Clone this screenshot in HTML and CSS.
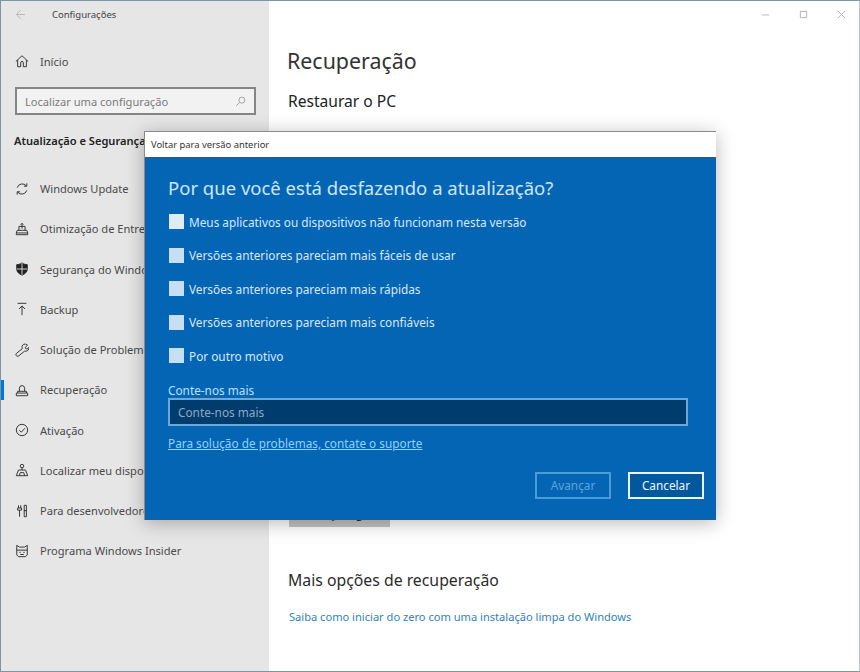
FILE: index.html
```html
<!DOCTYPE html>
<html lang="pt-BR">
<head>
<meta charset="utf-8">
<title>Configurações</title>
<link rel="stylesheet" href="styles.css">
</head>
<body>
<div class="window">
  <aside class="sidebar">
    <div class="appbar">
      <svg class="back" viewBox="0 0 12 12"><path d="M11 6H1.500M6 1.500L1.500 6L6 10.500"/></svg>
      <span class="apptitle">Configurações</span>
    </div>
    <a class="nav home">
      <svg class="ico" viewBox="0 0 16 16"><path d="M1 8.500L8 2l7 6.500M3 7v7.500h3.500V10a1.500 1.500 0 0 1 3 0v4.500H13V7"/></svg>
      <span>Início</span>
    </a>
    <div class="search">
      <span>Localizar uma configuração</span>
      <svg class="searchico" viewBox="0 0 12 12"><circle cx="7.500" cy="4.500" r="3.300"/><path d="M5 7L1.500 10.500"/></svg>
    </div>
    <div class="section">Atualização e Segurança</div>
    <nav class="navlist">
      <a class="nav">
        <svg class="ico" viewBox="0 0 16 16"><path d="M2.500 6.500A6 6 0 0 1 13 4.500M13.500 9.500A6 6 0 0 1 3 11.500M13.500 1.500v3.300h-3.300M2.500 14.500v-3.300h3.300"/></svg>
        <span>Windows Update</span>
      </a>
      <a class="nav">
        <svg class="ico" viewBox="0 0 16 16"><path d="M1.500 14.500h13v-2l-1-3h-11l-1 3zM1.500 12.500h13M4.500 9.500V5h7v4.500M8 7.500V1.500M6.500 3L8 1.500L9.500 3"/></svg>
        <span>Otimização de Entrega</span>
      </a>
      <a class="nav">
        <svg class="ico" viewBox="0 0 16 16"><path class="solid" d="M8 1C6 2.500 4 3 2 3v5c0 3.500 2.500 5.500 6 7c3.500-1.500 6-3.500 6-7V3c-2 0-4-.5-6-2z"/><path class="cut" d="M8 1v14M2 8h12"/></svg>
        <span>Segurança do Windows</span>
      </a>
      <a class="nav">
        <svg class="ico" viewBox="0 0 16 16"><path d="M3 1.500h10M8 15V4.500M4.500 8L8 4.500L11.500 8"/></svg>
        <span>Backup</span>
      </a>
      <a class="nav">
        <svg class="ico" viewBox="0 0 16 16"><path d="M9.800 1.500a4 4 0 0 1 4.500 1l-2.600 2.400l.6 1.600l1.700.3l2-2a4 4 0 0 1-5 4.500L4.500 14.500a1.800 1.800 0 0 1-3-2.500L8.300 6.500a4 4 0 0 1 1.500-5z"/></svg>
        <span>Solução de Problemas</span>
      </a>
      <a class="nav current">
        <svg class="ico" viewBox="0 0 16 16"><path d="M1.500 11.500h13v3h-13zM3 11.500V9.500h10v2M5 9.500V6a3 3 0 0 1 6 0v3.500"/></svg>
        <span>Recuperação</span>
      </a>
      <a class="nav">
        <svg class="ico" viewBox="0 0 16 16"><circle cx="8" cy="8" r="6.500"/><path d="M5 8.300l2.200 2.200L11.300 6"/></svg>
        <span>Ativação</span>
      </a>
      <a class="nav">
        <svg class="ico" viewBox="0 0 16 16"><circle cx="8" cy="3.500" r="2"/><path d="M8 5.500V8M4 8h8l2.500 6.500h-13zM5 14.500l1-3.500h4l1 3.500"/></svg>
        <span>Localizar meu dispositivo</span>
      </a>
      <a class="nav">
        <svg class="ico" viewBox="0 0 16 16"><path d="M4 1.500v3M6.500 1.500v3M3 4.500h4.500v2.500H3zM5.200 7v7.500M10.500 1.500h2.500v6h-2.500zM10.500 7.500h2.500v7h-2.500z"/></svg>
        <span>Para desenvolvedores</span>
      </a>
      <a class="nav">
        <svg class="ico" viewBox="0 0 16 16"><path d="M2 1.500l3 2h6l3-2v11l-2 2H4l-2-2zM2 7h12M5 9.500h1.500M9.500 9.500H11M6 12h4"/></svg>
        <span>Programa Windows Insider</span>
      </a>
    </nav>
  </aside>
  <main class="content">
    <div class="controls">
      <svg class="ctl" viewBox="0 0 10 10"><path d="M1 5.500h8"/></svg>
      <svg class="ctl" viewBox="0 0 10 10"><path d="M1.500 1.500h7v7h-7z"/></svg>
      <svg class="ctl" viewBox="0 0 10 10"><path d="M1 1l8 8M9 1l-8 8"/></svg>
    </div>
    <h1 class="title">Recuperação</h1>
    <h2 class="subtitle">Restaurar o PC</h2>
    <div class="behind"><span class="startbtn">Começar agora</span></div>
    <h2 class="more">Mais opções de recuperação</h2>
    <a class="morelink">Saiba como iniciar do zero com uma instalação limpa do Windows</a>
  </main>
</div>

<section class="dialog">
  <header class="dialogbar">Voltar para versão anterior</header>
  <div class="dialogbody">
    <h2 class="question">Por que você está desfazendo a atualização?</h2>
    <ul class="options">
      <li class="option"><span class="check first"></span>Meus aplicativos ou dispositivos não funcionam nesta versão</li>
      <li class="option"><span class="check"></span>Versões anteriores pareciam mais fáceis de usar</li>
      <li class="option"><span class="check"></span>Versões anteriores pareciam mais rápidas</li>
      <li class="option"><span class="check"></span>Versões anteriores pareciam mais confiáveis</li>
      <li class="option"><span class="check"></span>Por outro motivo</li>
    </ul>
    <div class="fieldlabel">Conte-nos mais</div>
    <div class="field">Conte-nos mais</div>
    <a class="support">Para solução de problemas, contate o suporte</a>
    <div class="buttons">
      <span class="btn disabled">Avançar</span>
      <span class="btn primary">Cancelar</span>
    </div>
  </div>
</section>
</body>
</html>
```

FILE: styles.css
```css
* { box-sizing: border-box; }
html, body { margin: 0; padding: 0; }
body {
  width: 860px;
  height: 672px;
  overflow: hidden;
  background: #fff;
  font-family: "Noto Sans", "Liberation Sans", sans-serif;
  color: #333;
}
a { text-decoration: none; color: inherit; }
h1, h2, ul { margin: 0; padding: 0; font-weight: 400; }
li { list-style: none; }

.window {
  display: flex;
  width: 860px;
  height: 672px;
  border: 1px solid #7d96a6;
  border-right-color: #b9c6cf;
}

.sidebar {
  width: 268px;
  flex: none;
  background: #e6e6e6;
  padding-top: 3px;
}
.appbar {
  display: flex;
  align-items: center;
  height: 20px;
  padding-left: 14px;
}
.back { width: 11px; height: 11px; fill: none; stroke: #b5b5b5; stroke-width: 1; }
.apptitle { margin-left: 26px; font-size: 9.500px; color: #444; }

.nav {
  display: flex;
  align-items: center;
  height: 40.250px;
  padding-left: 14px;
  font-size: 11.100px;
  color: #4a4a4a;
  position: relative;
}
.nav span { margin-left: 11px; white-space: nowrap; }
.home { margin-top: 19px; height: 36px; }
.ico { width: 14px; height: 14px; flex: none; fill: none; stroke: #333; stroke-width: 1.100; }
.ico .solid { fill: #222; stroke: #222; }
.ico .cut { stroke: #e6e6e6; stroke-width: 1; }
.current::before {
  content: "";
  position: absolute;
  left: 0;
  top: 10px;
  width: 3px;
  height: 20px;
  background: #0078d7;
}

.search {
  display: flex;
  align-items: center;
  justify-content: space-between;
  width: 241px;
  height: 28px;
  margin: 8px 0 0 14px;
  padding: 0 8px 0 8px;
  border: 2px solid #858585;
  background: #f2f2f2;
  font-size: 11.100px;
  color: #7b7b7b;
}
.searchico { width: 11px; height: 11px; fill: none; stroke: #9c9c9c; stroke-width: 1; }

.section {
  margin: 17px 0 0 13px;
  height: 18px;
  line-height: 18px;
  font-size: 11.100px;
  font-weight: 600;
  color: #222;
  white-space: nowrap;
}
.navlist { margin-top: 18.400px; }

.content {
  flex: 1;
  display: flex;
  flex-direction: column;
  padding-left: 20px;
  background: #fff;
  position: relative;
}
.controls {
  display: flex;
  justify-content: flex-end;
  gap: 29px;
  height: 28px;
  padding: 9px 13px 0 0;
}
.ctl { width: 9px; height: 9px; fill: none; stroke: #aab0b5; stroke-width: 1; }
.title {
  margin-top: 15px;
  margin-left: -2px;
  height: 33px;
  line-height: 33px;
  font-size: 21.400px;
  color: #333;
}
.subtitle {
  margin-top: 12px;
  margin-left: -1px;
  height: 24px;
  line-height: 24px;
  font-size: 15.600px;
  color: #222;
}
.behind { margin-top: 382px; height: 32px; }
.startbtn {
  display: block;
  width: 101px;
  height: 32px;
  line-height: 38px;
  background: #c4c4c4;
  text-align: center;
  font-size: 11.500px;
  color: #222;
}
.more {
  margin-top: 41px;
  margin-left: -1px;
  height: 24px;
  line-height: 24px;
  font-size: 15.800px;
  color: #2b2b2b;
}
.morelink {
  margin-top: 17px;
  font-size: 11.100px;
  color: #2f85b8;
  white-space: nowrap;
}

.dialog {
  position: absolute;
  left: 144px;
  top: 131px;
  width: 572px;
  height: 389px;
  display: flex;
  flex-direction: column;
  box-shadow: 0 3px 18px rgba(0, 0, 0, .28);
  border: 1px solid #8a8a8a;
  border-bottom: 0;
  border-right: 0;
}
.dialogbar {
  height: 25px;
  line-height: 25px;
  padding-left: 6px;
  background: #fff;
  font-size: 9.400px;
  color: #333;
}
.dialogbody {
  flex: 1;
  background: #0565b5;
  padding: 16px 28px 0 23px;
  color: #d5e8f7;
}
.question {
  height: 30px;
  line-height: 30px;
  font-size: 18.500px;
  color: #cde5f8;
  white-space: nowrap;
}
.options { margin-top: 2px; }
.option {
  display: flex;
  align-items: center;
  height: 33.500px;
  font-size: 11.800px;
  color: #d5e8f7;
  white-space: nowrap;
}
.check {
  width: 15px;
  height: 15px;
  margin: 0 5px 0 1px;
  flex: none;
  background: #c6dff3;
}
.check.first { background: #dfebf5; }
.fieldlabel {
  margin-top: 9px;
  height: 16px;
  line-height: 16px;
  font-size: 11.800px;
  color: #b9e0fb;
}
.field {
  height: 28px;
  line-height: 24px;
  padding-left: 8px;
  border: 2px solid #69a9dc;
  background: #003c6e;
  font-size: 11.800px;
  color: #8fa8bf;
}
.support {
  display: block;
  margin-top: 9px;
  font-size: 11.800px;
  color: #8fd2fa;
  text-decoration: underline;
  white-space: nowrap;
}
.buttons {
  display: flex;
  justify-content: flex-end;
  gap: 17px;
  margin-top: 21px;
  margin-right: -16px;
}
.btn {
  width: 76px;
  height: 27px;
  line-height: 23px;
  text-align: center;
  font-size: 11.800px;
  border: 2px solid;
}
.disabled { border-color: #4b9ad9; color: #5da4de; }
.primary { border-color: #eaf4fb; background: #00589f; color: #f0f7fc; }
```
